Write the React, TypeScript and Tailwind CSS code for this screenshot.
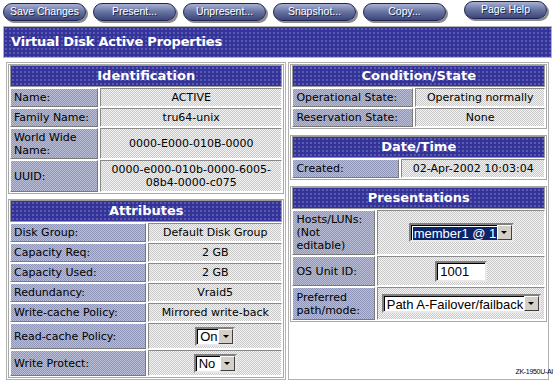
import type { ReactNode } from "react";

const labelBg =
  "bg-[#a3a9c6] bg-[image:repeating-conic-gradient(#8f96b8_0%_25%,#b9bed6_0%_50%)] bg-[length:2px_2px]";
const valueBg =
  "bg-[#dedede] bg-[image:repeating-conic-gradient(#c8c8c8_0%_25%,#f4f4f4_0%_50%)] bg-[length:2px_2px]";
const blueBg =
  "bg-[#333399] bg-[image:radial-gradient(#5b5bb0_0.7px,transparent_0.9px)] bg-[length:4px_4px]";

type Row = { label: string; value: ReactNode; h: string };

function Button({ label, lift }: { label: string; lift?: boolean }) {
  return (
    <div
      className={`flex h-[18px] w-[83px] items-center justify-center rounded-full border border-[#1d2452] bg-gradient-to-b from-[#a9b1d4] via-[#66729f] to-[#3d4679] font-['Liberation_Sans',sans-serif] text-[10.5px] text-white shadow-[2px_2px_0_#8c8c8c] [text-shadow:1px_1px_0_#1d2452] ${
        lift ? "-mt-[2px]" : ""
      }`}
    >
      {label}
    </div>
  );
}

function Panel({ title, labelW, rows }: { title: string; labelW: string; rows: Row[] }) {
  return (
    <div className="flex flex-col gap-[1px] border border-[#a8a8a8] px-[1px] pb-[1px]">
      <div
        className={`flex h-[22px] items-center justify-center border border-[#9a9a9a] text-[13px] font-bold text-white ${blueBg}`}
      >
        {title}
      </div>
      {rows.map((r) => (
        <div key={r.label} className={`flex gap-[2px] ${r.h}`}>
          <div
            className={`flex ${labelW} shrink-0 items-center border border-t-white border-l-white border-b-[#7a7a7a] border-r-[#7a7a7a] px-[3px] leading-[13px] text-black ${labelBg}`}
          >
            {r.label}
          </div>
          <div
            className={`flex flex-1 items-center justify-center border border-t-[#8a8a8a] border-l-[#8a8a8a] border-b-white border-r-white px-[3px] text-center leading-[13px] text-black ${valueBg}`}
          >
            {r.value}
          </div>
        </div>
      ))}
    </div>
  );
}

function Arrow() {
  return (
    <div className="flex w-[15px] shrink-0 items-center justify-center border border-t-white border-l-white border-b-[#404040] border-r-[#404040] bg-[#d4d0c8]">
      <div className="h-0 w-0 border-x-[3px] border-t-[3px] border-x-transparent border-t-black" />
    </div>
  );
}

function Select({ value, w, selected }: { value: string; w: string; selected?: boolean }) {
  return (
    <div
      className={`flex h-[19px] ${w} border-2 border-t-[#808080] border-l-[#808080] border-b-[#e8e8e8] border-r-[#e8e8e8] bg-white font-['Liberation_Sans',sans-serif] text-[13px]`}
    >
      <div className="flex min-w-0 flex-1 items-center overflow-hidden border-t border-l border-black p-[1px]">
        <span
          className={`whitespace-nowrap px-[1px] leading-[13px] ${
            selected ? "flex-1 bg-[#0a246a] text-white" : "text-black"
          }`}
        >
          {value}
        </span>
      </div>
      <Arrow />
    </div>
  );
}

export default function App() {
  const identification: Row[] = [
    { label: "Name:", value: "ACTIVE", h: "h-[19px]" },
    { label: "Family Name:", value: "tru64-unix", h: "h-[19px]" },
    { label: "World Wide Name:", value: "0000-E000-010B-0000", h: "h-[31px]" },
    { label: "UUID:", value: "0000-e000-010b-0000-6005-08b4-0000-c075", h: "h-[32px]" },
  ];

  const attributes: Row[] = [
    { label: "Disk Group:", value: "Default Disk Group", h: "h-[19px]" },
    { label: "Capacity Req:", value: "2 GB", h: "h-[19px]" },
    { label: "Capacity Used:", value: "2 GB", h: "h-[19px]" },
    { label: "Redundancy:", value: "Vraid5", h: "h-[19px]" },
    { label: "Write-cache Policy:", value: "Mirrored write-back", h: "h-[19px]" },
    { label: "Read-cache Policy:", value: <Select value="On" w="w-[40px]" />, h: "h-[26px]" },
    { label: "Write Protect:", value: <Select value="No" w="w-[43px]" />, h: "h-[26px]" },
  ];

  const condition: Row[] = [
    { label: "Operational State:", value: "Operating normally", h: "h-[19px]" },
    { label: "Reservation State:", value: "None", h: "h-[19px]" },
  ];

  const dateTime: Row[] = [{ label: "Created:", value: "02-Apr-2002 10:03:04", h: "h-[19px]" }];

  const presentations: Row[] = [
    {
      label: "Hosts/LUNs: (Not editable)",
      value: <Select value="member1 @ 1" w="w-[105px]" selected />,
      h: "h-[45px]",
    },
    {
      label: "OS Unit ID:",
      value: (
        <div className="flex h-[21px] w-[52px] items-center border-2 border-t-[#808080] border-l-[#808080] border-b-[#e8e8e8] border-r-[#e8e8e8] bg-white">
          <div className="flex h-full w-full items-center border-t border-l border-black px-[2px] font-['Liberation_Sans',sans-serif] text-[13px] text-black">
            1001
          </div>
        </div>
      ),
      h: "h-[30px]",
    },
    {
      label: "Preferred path/mode:",
      value: <Select value="Path A-Failover/failback" w="w-[159px]" />,
      h: "h-[33px]",
    },
  ];

  return (
    <div className="relative h-[380px] w-[555px] overflow-hidden bg-white font-['DejaVu_Sans',sans-serif] text-[11px]">
      <div className="flex items-start gap-[7px] pl-[3px] pt-[3px]">
        <Button label="Save Changes" />
        <Button label="Present..." />
        <Button label="Unpresent..." />
        <Button label="Snapshot..." />
        <Button label="Copy..." />
        <div className="ml-[11px]">
          <Button label="Page Help" lift />
        </div>
      </div>

      <div className="mx-[3px] mt-[5px] border border-[#b4b4b4]">
        <div
          className={`flex h-[30px] items-center px-[7px] text-[13px] font-bold tracking-[-0.2px] text-white ${blueBg}`}
        >
          Virtual Disk Active Properties
        </div>
      </div>

      <div className="mt-[4px] flex gap-[2px] px-[6px]">
        <div className="flex h-[318px] w-[282px] flex-col gap-[5px] border border-[#b0b0b0] p-[1px]">
          <Panel title="Identification" labelW="w-[88px]" rows={identification} />
          <Panel title="Attributes" labelW="w-[136px]" rows={attributes} />
        </div>
        <div className="flex h-[318px] w-[262px] flex-col gap-[6px] border border-[#b0b0b0] p-[1px]">
          <Panel title="Condition/State" labelW="w-[121px]" rows={condition} />
          <Panel title="Date/Time" labelW="w-[107px]" rows={dateTime} />
          <Panel title="Presentations" labelW="w-[83px]" rows={presentations} />
        </div>
      </div>

      <div className="absolute bottom-[4px] right-[2px] font-['Liberation_Sans',sans-serif] text-[7px] leading-[8px] tracking-[-0.3px] text-black">
        ZK-1950U-AI
      </div>
    </div>
  );
}
